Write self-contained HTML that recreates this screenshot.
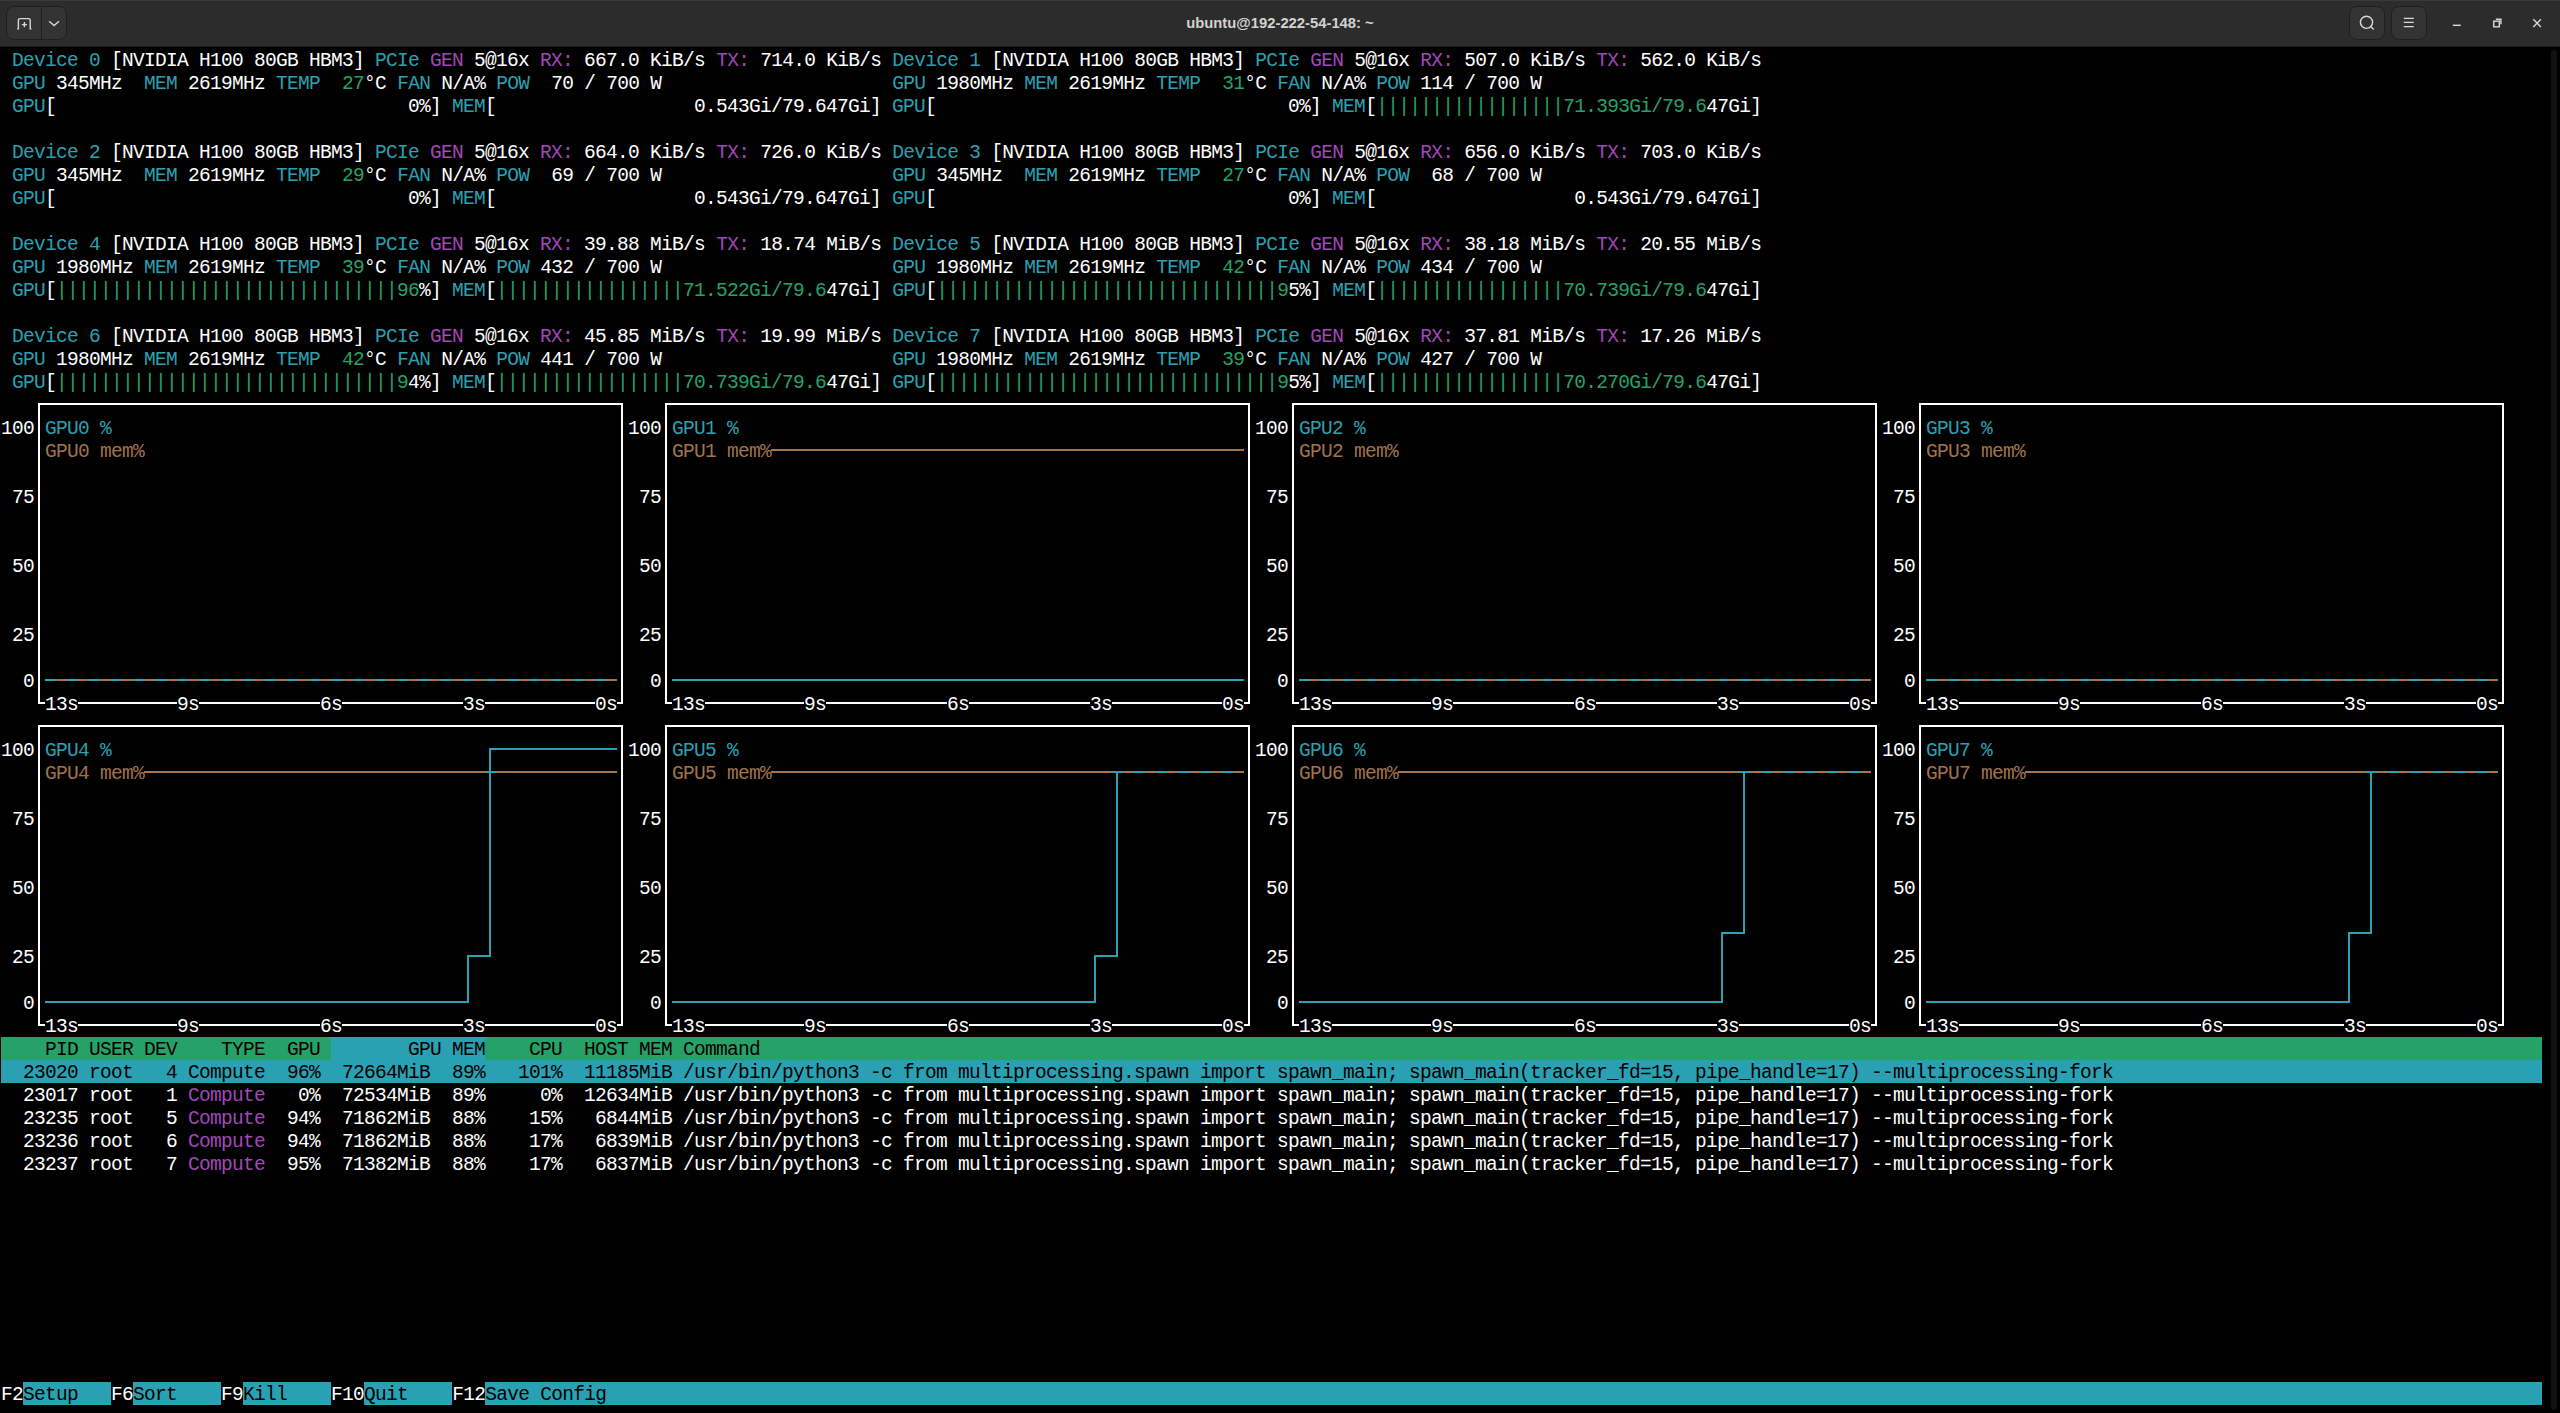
<!DOCTYPE html><html><head><meta charset="utf-8"><style>
html,body{margin:0;padding:0;width:2560px;height:1413px;overflow:hidden;background:#000}
.r{position:absolute;left:1px;height:23px;line-height:23px;font-family:"Liberation Mono",monospace;font-size:19.500px;letter-spacing:-0.7019px;white-space:pre;color:#fff}
.b{position:absolute}
.c{color:#2aa1b3}.g{color:#26a269}.m{color:#a347ba}.y{color:#a2734c}.k{color:#000000}
#hb{position:absolute;left:0;top:0;width:2560px;height:46px;background:#2c2c2c;box-shadow:inset 0 1px 0 #3a3a3a;border-bottom:1px solid #1b1b1b}
.btn{position:absolute;top:6px;height:32px;background:#333;border:1px solid #1f1f1f;border-radius:8px;box-sizing:content-box}
#title{position:absolute;left:0;top:0;width:2560px;height:46px;line-height:46px;text-align:center;font-family:"Liberation Sans",sans-serif;font-weight:bold;font-size:14.8px;color:#d2d2d2}
</style></head><body>
<div id="hb"></div>
<div class="btn" style="left:6px;width:59px"></div><div class="b" style="left:41px;top:7px;width:1px;height:32px;background:#1f1f1f"></div>
<svg class="b" style="left:0;top:0" width="80" height="47" viewBox="0 0 80 47" fill="none" stroke="#d8d8d8" stroke-width="1.4"><path d="M17.2 28.7 h1.2 v-8.6 a1.5 1.5 0 0 1 1.5 -1.5 h8.8 a1.5 1.5 0 0 1 1.5 1.5 v8.6 h1.2"/><path d="M24.4 22 v5.2 M21.8 24.6 h5.2"/><path d="M49.2 21.2 l4.9 4.4 l4.9 -4.4"/></svg>
<div id="title">ubuntu@192-222-54-148: ~</div>
<div class="btn" style="left:2349px;width:34px"></div><div class="btn" style="left:2391px;width:34px"></div>
<svg class="b" style="left:2340px;top:0" width="220" height="47" viewBox="0 0 220 47" fill="none" stroke="#d8d8d8" stroke-width="1.4"><circle cx="26.5" cy="22.3" r="6.1"/><path d="M30.7 26.6 l3 3"/><path d="M63.8 18.4 h10 M63.8 22.4 h10 M63.8 26.6 h10"/><path d="M112.8 25.3 h8"/><rect x="153.7" y="21.2" width="5.6" height="5.6"/><path d="M155.8 19.2 h5.1 v5.1"/><path d="M193.3 19.3 l7.6 7.6 M200.9 19.3 l-7.6 7.6"/></svg>
<div class="b" style="left:2551px;top:50px;width:6px;height:1360px;background:#111;border-radius:3px"></div>
<div class="b" style="left:1px;top:1037px;width:330px;height:23px;background:#26a269"></div>
<div class="b" style="left:331px;top:1037px;width:154px;height:23px;background:#2aa1b3"></div>
<div class="b" style="left:485px;top:1037px;width:2057px;height:23px;background:#26a269"></div>
<div class="b" style="left:1px;top:1060px;width:2541px;height:23px;background:#2aa1b3"></div>
<div class="b" style="left:23px;top:1382px;width:88px;height:23px;background:#2aa1b3"></div>
<div class="b" style="left:133px;top:1382px;width:88px;height:23px;background:#2aa1b3"></div>
<div class="b" style="left:243px;top:1382px;width:88px;height:23px;background:#2aa1b3"></div>
<div class="b" style="left:364px;top:1382px;width:88px;height:23px;background:#2aa1b3"></div>
<div class="b" style="left:485px;top:1382px;width:2057px;height:23px;background:#2aa1b3"></div>
<div class="b" style="left:771px;top:449px;width:473px;height:2px;background:#a2734c"></div>
<div class="b" style="left:56px;top:679px;width:11px;height:2px;background:#a2734c"></div>
<div class="b" style="left:78px;top:679px;width:11px;height:2px;background:#a2734c"></div>
<div class="b" style="left:100px;top:679px;width:11px;height:2px;background:#a2734c"></div>
<div class="b" style="left:122px;top:679px;width:11px;height:2px;background:#a2734c"></div>
<div class="b" style="left:144px;top:679px;width:11px;height:2px;background:#a2734c"></div>
<div class="b" style="left:166px;top:679px;width:11px;height:2px;background:#a2734c"></div>
<div class="b" style="left:188px;top:679px;width:11px;height:2px;background:#a2734c"></div>
<div class="b" style="left:210px;top:679px;width:11px;height:2px;background:#a2734c"></div>
<div class="b" style="left:232px;top:679px;width:11px;height:2px;background:#a2734c"></div>
<div class="b" style="left:254px;top:679px;width:11px;height:2px;background:#a2734c"></div>
<div class="b" style="left:276px;top:679px;width:11px;height:2px;background:#a2734c"></div>
<div class="b" style="left:298px;top:679px;width:11px;height:2px;background:#a2734c"></div>
<div class="b" style="left:320px;top:679px;width:11px;height:2px;background:#a2734c"></div>
<div class="b" style="left:342px;top:679px;width:11px;height:2px;background:#a2734c"></div>
<div class="b" style="left:364px;top:679px;width:11px;height:2px;background:#a2734c"></div>
<div class="b" style="left:386px;top:679px;width:11px;height:2px;background:#a2734c"></div>
<div class="b" style="left:408px;top:679px;width:11px;height:2px;background:#a2734c"></div>
<div class="b" style="left:430px;top:679px;width:11px;height:2px;background:#a2734c"></div>
<div class="b" style="left:452px;top:679px;width:11px;height:2px;background:#a2734c"></div>
<div class="b" style="left:474px;top:679px;width:11px;height:2px;background:#a2734c"></div>
<div class="b" style="left:496px;top:679px;width:11px;height:2px;background:#a2734c"></div>
<div class="b" style="left:518px;top:679px;width:11px;height:2px;background:#a2734c"></div>
<div class="b" style="left:540px;top:679px;width:11px;height:2px;background:#a2734c"></div>
<div class="b" style="left:562px;top:679px;width:11px;height:2px;background:#a2734c"></div>
<div class="b" style="left:584px;top:679px;width:11px;height:2px;background:#a2734c"></div>
<div class="b" style="left:606px;top:679px;width:11px;height:2px;background:#a2734c"></div>
<div class="b" style="left:1310px;top:679px;width:11px;height:2px;background:#a2734c"></div>
<div class="b" style="left:1332px;top:679px;width:11px;height:2px;background:#a2734c"></div>
<div class="b" style="left:1354px;top:679px;width:11px;height:2px;background:#a2734c"></div>
<div class="b" style="left:1376px;top:679px;width:11px;height:2px;background:#a2734c"></div>
<div class="b" style="left:1398px;top:679px;width:11px;height:2px;background:#a2734c"></div>
<div class="b" style="left:1420px;top:679px;width:11px;height:2px;background:#a2734c"></div>
<div class="b" style="left:1442px;top:679px;width:11px;height:2px;background:#a2734c"></div>
<div class="b" style="left:1464px;top:679px;width:11px;height:2px;background:#a2734c"></div>
<div class="b" style="left:1486px;top:679px;width:11px;height:2px;background:#a2734c"></div>
<div class="b" style="left:1508px;top:679px;width:11px;height:2px;background:#a2734c"></div>
<div class="b" style="left:1530px;top:679px;width:11px;height:2px;background:#a2734c"></div>
<div class="b" style="left:1552px;top:679px;width:11px;height:2px;background:#a2734c"></div>
<div class="b" style="left:1574px;top:679px;width:11px;height:2px;background:#a2734c"></div>
<div class="b" style="left:1596px;top:679px;width:11px;height:2px;background:#a2734c"></div>
<div class="b" style="left:1618px;top:679px;width:11px;height:2px;background:#a2734c"></div>
<div class="b" style="left:1640px;top:679px;width:11px;height:2px;background:#a2734c"></div>
<div class="b" style="left:1662px;top:679px;width:11px;height:2px;background:#a2734c"></div>
<div class="b" style="left:1684px;top:679px;width:11px;height:2px;background:#a2734c"></div>
<div class="b" style="left:1706px;top:679px;width:11px;height:2px;background:#a2734c"></div>
<div class="b" style="left:1728px;top:679px;width:11px;height:2px;background:#a2734c"></div>
<div class="b" style="left:1750px;top:679px;width:11px;height:2px;background:#a2734c"></div>
<div class="b" style="left:1772px;top:679px;width:11px;height:2px;background:#a2734c"></div>
<div class="b" style="left:1794px;top:679px;width:11px;height:2px;background:#a2734c"></div>
<div class="b" style="left:1816px;top:679px;width:11px;height:2px;background:#a2734c"></div>
<div class="b" style="left:1838px;top:679px;width:11px;height:2px;background:#a2734c"></div>
<div class="b" style="left:1860px;top:679px;width:11px;height:2px;background:#a2734c"></div>
<div class="b" style="left:1937px;top:679px;width:11px;height:2px;background:#a2734c"></div>
<div class="b" style="left:1959px;top:679px;width:11px;height:2px;background:#a2734c"></div>
<div class="b" style="left:1981px;top:679px;width:11px;height:2px;background:#a2734c"></div>
<div class="b" style="left:2003px;top:679px;width:11px;height:2px;background:#a2734c"></div>
<div class="b" style="left:2025px;top:679px;width:11px;height:2px;background:#a2734c"></div>
<div class="b" style="left:2047px;top:679px;width:11px;height:2px;background:#a2734c"></div>
<div class="b" style="left:2069px;top:679px;width:11px;height:2px;background:#a2734c"></div>
<div class="b" style="left:2091px;top:679px;width:11px;height:2px;background:#a2734c"></div>
<div class="b" style="left:2113px;top:679px;width:11px;height:2px;background:#a2734c"></div>
<div class="b" style="left:2135px;top:679px;width:11px;height:2px;background:#a2734c"></div>
<div class="b" style="left:2157px;top:679px;width:11px;height:2px;background:#a2734c"></div>
<div class="b" style="left:2179px;top:679px;width:11px;height:2px;background:#a2734c"></div>
<div class="b" style="left:2201px;top:679px;width:11px;height:2px;background:#a2734c"></div>
<div class="b" style="left:2223px;top:679px;width:11px;height:2px;background:#a2734c"></div>
<div class="b" style="left:2245px;top:679px;width:11px;height:2px;background:#a2734c"></div>
<div class="b" style="left:2267px;top:679px;width:11px;height:2px;background:#a2734c"></div>
<div class="b" style="left:2289px;top:679px;width:11px;height:2px;background:#a2734c"></div>
<div class="b" style="left:2311px;top:679px;width:11px;height:2px;background:#a2734c"></div>
<div class="b" style="left:2333px;top:679px;width:11px;height:2px;background:#a2734c"></div>
<div class="b" style="left:2355px;top:679px;width:11px;height:2px;background:#a2734c"></div>
<div class="b" style="left:2377px;top:679px;width:11px;height:2px;background:#a2734c"></div>
<div class="b" style="left:2399px;top:679px;width:11px;height:2px;background:#a2734c"></div>
<div class="b" style="left:2421px;top:679px;width:11px;height:2px;background:#a2734c"></div>
<div class="b" style="left:2443px;top:679px;width:11px;height:2px;background:#a2734c"></div>
<div class="b" style="left:2465px;top:679px;width:11px;height:2px;background:#a2734c"></div>
<div class="b" style="left:2487px;top:679px;width:11px;height:2px;background:#a2734c"></div>
<div class="b" style="left:144px;top:771px;width:341px;height:2px;background:#a2734c"></div>
<div class="b" style="left:496px;top:771px;width:121px;height:2px;background:#a2734c"></div>
<div class="b" style="left:771px;top:771px;width:341px;height:2px;background:#a2734c"></div>
<div class="b" style="left:1123px;top:771px;width:11px;height:2px;background:#a2734c"></div>
<div class="b" style="left:1145px;top:771px;width:11px;height:2px;background:#a2734c"></div>
<div class="b" style="left:1167px;top:771px;width:11px;height:2px;background:#a2734c"></div>
<div class="b" style="left:1189px;top:771px;width:11px;height:2px;background:#a2734c"></div>
<div class="b" style="left:1211px;top:771px;width:11px;height:2px;background:#a2734c"></div>
<div class="b" style="left:1233px;top:771px;width:11px;height:2px;background:#a2734c"></div>
<div class="b" style="left:1398px;top:771px;width:341px;height:2px;background:#a2734c"></div>
<div class="b" style="left:1750px;top:771px;width:11px;height:2px;background:#a2734c"></div>
<div class="b" style="left:1772px;top:771px;width:11px;height:2px;background:#a2734c"></div>
<div class="b" style="left:1794px;top:771px;width:11px;height:2px;background:#a2734c"></div>
<div class="b" style="left:1816px;top:771px;width:11px;height:2px;background:#a2734c"></div>
<div class="b" style="left:1838px;top:771px;width:11px;height:2px;background:#a2734c"></div>
<div class="b" style="left:1860px;top:771px;width:11px;height:2px;background:#a2734c"></div>
<div class="b" style="left:2025px;top:771px;width:341px;height:2px;background:#a2734c"></div>
<div class="b" style="left:2377px;top:771px;width:11px;height:2px;background:#a2734c"></div>
<div class="b" style="left:2399px;top:771px;width:11px;height:2px;background:#a2734c"></div>
<div class="b" style="left:2421px;top:771px;width:11px;height:2px;background:#a2734c"></div>
<div class="b" style="left:2443px;top:771px;width:11px;height:2px;background:#a2734c"></div>
<div class="b" style="left:2465px;top:771px;width:11px;height:2px;background:#a2734c"></div>
<div class="b" style="left:2487px;top:771px;width:11px;height:2px;background:#a2734c"></div>
<div class="b" style="left:38px;top:403px;width:585px;height:2px;background:#ffffff"></div>
<div class="b" style="left:665px;top:403px;width:585px;height:2px;background:#ffffff"></div>
<div class="b" style="left:1292px;top:403px;width:585px;height:2px;background:#ffffff"></div>
<div class="b" style="left:1919px;top:403px;width:585px;height:2px;background:#ffffff"></div>
<div class="b" style="left:45px;top:679px;width:11px;height:2px;background:#2aa1b3"></div>
<div class="b" style="left:67px;top:679px;width:11px;height:2px;background:#2aa1b3"></div>
<div class="b" style="left:89px;top:679px;width:11px;height:2px;background:#2aa1b3"></div>
<div class="b" style="left:111px;top:679px;width:11px;height:2px;background:#2aa1b3"></div>
<div class="b" style="left:133px;top:679px;width:11px;height:2px;background:#2aa1b3"></div>
<div class="b" style="left:155px;top:679px;width:11px;height:2px;background:#2aa1b3"></div>
<div class="b" style="left:177px;top:679px;width:11px;height:2px;background:#2aa1b3"></div>
<div class="b" style="left:199px;top:679px;width:11px;height:2px;background:#2aa1b3"></div>
<div class="b" style="left:221px;top:679px;width:11px;height:2px;background:#2aa1b3"></div>
<div class="b" style="left:243px;top:679px;width:11px;height:2px;background:#2aa1b3"></div>
<div class="b" style="left:265px;top:679px;width:11px;height:2px;background:#2aa1b3"></div>
<div class="b" style="left:287px;top:679px;width:11px;height:2px;background:#2aa1b3"></div>
<div class="b" style="left:309px;top:679px;width:11px;height:2px;background:#2aa1b3"></div>
<div class="b" style="left:331px;top:679px;width:11px;height:2px;background:#2aa1b3"></div>
<div class="b" style="left:353px;top:679px;width:11px;height:2px;background:#2aa1b3"></div>
<div class="b" style="left:375px;top:679px;width:11px;height:2px;background:#2aa1b3"></div>
<div class="b" style="left:397px;top:679px;width:11px;height:2px;background:#2aa1b3"></div>
<div class="b" style="left:419px;top:679px;width:11px;height:2px;background:#2aa1b3"></div>
<div class="b" style="left:441px;top:679px;width:11px;height:2px;background:#2aa1b3"></div>
<div class="b" style="left:463px;top:679px;width:11px;height:2px;background:#2aa1b3"></div>
<div class="b" style="left:485px;top:679px;width:11px;height:2px;background:#2aa1b3"></div>
<div class="b" style="left:507px;top:679px;width:11px;height:2px;background:#2aa1b3"></div>
<div class="b" style="left:529px;top:679px;width:11px;height:2px;background:#2aa1b3"></div>
<div class="b" style="left:551px;top:679px;width:11px;height:2px;background:#2aa1b3"></div>
<div class="b" style="left:573px;top:679px;width:11px;height:2px;background:#2aa1b3"></div>
<div class="b" style="left:595px;top:679px;width:11px;height:2px;background:#2aa1b3"></div>
<div class="b" style="left:672px;top:679px;width:572px;height:2px;background:#2aa1b3"></div>
<div class="b" style="left:1299px;top:679px;width:11px;height:2px;background:#2aa1b3"></div>
<div class="b" style="left:1321px;top:679px;width:11px;height:2px;background:#2aa1b3"></div>
<div class="b" style="left:1343px;top:679px;width:11px;height:2px;background:#2aa1b3"></div>
<div class="b" style="left:1365px;top:679px;width:11px;height:2px;background:#2aa1b3"></div>
<div class="b" style="left:1387px;top:679px;width:11px;height:2px;background:#2aa1b3"></div>
<div class="b" style="left:1409px;top:679px;width:11px;height:2px;background:#2aa1b3"></div>
<div class="b" style="left:1431px;top:679px;width:11px;height:2px;background:#2aa1b3"></div>
<div class="b" style="left:1453px;top:679px;width:11px;height:2px;background:#2aa1b3"></div>
<div class="b" style="left:1475px;top:679px;width:11px;height:2px;background:#2aa1b3"></div>
<div class="b" style="left:1497px;top:679px;width:11px;height:2px;background:#2aa1b3"></div>
<div class="b" style="left:1519px;top:679px;width:11px;height:2px;background:#2aa1b3"></div>
<div class="b" style="left:1541px;top:679px;width:11px;height:2px;background:#2aa1b3"></div>
<div class="b" style="left:1563px;top:679px;width:11px;height:2px;background:#2aa1b3"></div>
<div class="b" style="left:1585px;top:679px;width:11px;height:2px;background:#2aa1b3"></div>
<div class="b" style="left:1607px;top:679px;width:11px;height:2px;background:#2aa1b3"></div>
<div class="b" style="left:1629px;top:679px;width:11px;height:2px;background:#2aa1b3"></div>
<div class="b" style="left:1651px;top:679px;width:11px;height:2px;background:#2aa1b3"></div>
<div class="b" style="left:1673px;top:679px;width:11px;height:2px;background:#2aa1b3"></div>
<div class="b" style="left:1695px;top:679px;width:11px;height:2px;background:#2aa1b3"></div>
<div class="b" style="left:1717px;top:679px;width:11px;height:2px;background:#2aa1b3"></div>
<div class="b" style="left:1739px;top:679px;width:11px;height:2px;background:#2aa1b3"></div>
<div class="b" style="left:1761px;top:679px;width:11px;height:2px;background:#2aa1b3"></div>
<div class="b" style="left:1783px;top:679px;width:11px;height:2px;background:#2aa1b3"></div>
<div class="b" style="left:1805px;top:679px;width:11px;height:2px;background:#2aa1b3"></div>
<div class="b" style="left:1827px;top:679px;width:11px;height:2px;background:#2aa1b3"></div>
<div class="b" style="left:1849px;top:679px;width:11px;height:2px;background:#2aa1b3"></div>
<div class="b" style="left:1926px;top:679px;width:11px;height:2px;background:#2aa1b3"></div>
<div class="b" style="left:1948px;top:679px;width:11px;height:2px;background:#2aa1b3"></div>
<div class="b" style="left:1970px;top:679px;width:11px;height:2px;background:#2aa1b3"></div>
<div class="b" style="left:1992px;top:679px;width:11px;height:2px;background:#2aa1b3"></div>
<div class="b" style="left:2014px;top:679px;width:11px;height:2px;background:#2aa1b3"></div>
<div class="b" style="left:2036px;top:679px;width:11px;height:2px;background:#2aa1b3"></div>
<div class="b" style="left:2058px;top:679px;width:11px;height:2px;background:#2aa1b3"></div>
<div class="b" style="left:2080px;top:679px;width:11px;height:2px;background:#2aa1b3"></div>
<div class="b" style="left:2102px;top:679px;width:11px;height:2px;background:#2aa1b3"></div>
<div class="b" style="left:2124px;top:679px;width:11px;height:2px;background:#2aa1b3"></div>
<div class="b" style="left:2146px;top:679px;width:11px;height:2px;background:#2aa1b3"></div>
<div class="b" style="left:2168px;top:679px;width:11px;height:2px;background:#2aa1b3"></div>
<div class="b" style="left:2190px;top:679px;width:11px;height:2px;background:#2aa1b3"></div>
<div class="b" style="left:2212px;top:679px;width:11px;height:2px;background:#2aa1b3"></div>
<div class="b" style="left:2234px;top:679px;width:11px;height:2px;background:#2aa1b3"></div>
<div class="b" style="left:2256px;top:679px;width:11px;height:2px;background:#2aa1b3"></div>
<div class="b" style="left:2278px;top:679px;width:11px;height:2px;background:#2aa1b3"></div>
<div class="b" style="left:2300px;top:679px;width:11px;height:2px;background:#2aa1b3"></div>
<div class="b" style="left:2322px;top:679px;width:11px;height:2px;background:#2aa1b3"></div>
<div class="b" style="left:2344px;top:679px;width:11px;height:2px;background:#2aa1b3"></div>
<div class="b" style="left:2366px;top:679px;width:11px;height:2px;background:#2aa1b3"></div>
<div class="b" style="left:2388px;top:679px;width:11px;height:2px;background:#2aa1b3"></div>
<div class="b" style="left:2410px;top:679px;width:11px;height:2px;background:#2aa1b3"></div>
<div class="b" style="left:2432px;top:679px;width:11px;height:2px;background:#2aa1b3"></div>
<div class="b" style="left:2454px;top:679px;width:11px;height:2px;background:#2aa1b3"></div>
<div class="b" style="left:2476px;top:679px;width:11px;height:2px;background:#2aa1b3"></div>
<div class="b" style="left:38px;top:702px;width:7px;height:2px;background:#ffffff"></div>
<div class="b" style="left:78px;top:702px;width:99px;height:2px;background:#ffffff"></div>
<div class="b" style="left:199px;top:702px;width:121px;height:2px;background:#ffffff"></div>
<div class="b" style="left:342px;top:702px;width:121px;height:2px;background:#ffffff"></div>
<div class="b" style="left:485px;top:702px;width:110px;height:2px;background:#ffffff"></div>
<div class="b" style="left:617px;top:702px;width:6px;height:2px;background:#ffffff"></div>
<div class="b" style="left:665px;top:702px;width:7px;height:2px;background:#ffffff"></div>
<div class="b" style="left:705px;top:702px;width:99px;height:2px;background:#ffffff"></div>
<div class="b" style="left:826px;top:702px;width:121px;height:2px;background:#ffffff"></div>
<div class="b" style="left:969px;top:702px;width:121px;height:2px;background:#ffffff"></div>
<div class="b" style="left:1112px;top:702px;width:110px;height:2px;background:#ffffff"></div>
<div class="b" style="left:1244px;top:702px;width:6px;height:2px;background:#ffffff"></div>
<div class="b" style="left:1292px;top:702px;width:7px;height:2px;background:#ffffff"></div>
<div class="b" style="left:1332px;top:702px;width:99px;height:2px;background:#ffffff"></div>
<div class="b" style="left:1453px;top:702px;width:121px;height:2px;background:#ffffff"></div>
<div class="b" style="left:1596px;top:702px;width:121px;height:2px;background:#ffffff"></div>
<div class="b" style="left:1739px;top:702px;width:110px;height:2px;background:#ffffff"></div>
<div class="b" style="left:1871px;top:702px;width:6px;height:2px;background:#ffffff"></div>
<div class="b" style="left:1919px;top:702px;width:7px;height:2px;background:#ffffff"></div>
<div class="b" style="left:1959px;top:702px;width:99px;height:2px;background:#ffffff"></div>
<div class="b" style="left:2080px;top:702px;width:121px;height:2px;background:#ffffff"></div>
<div class="b" style="left:2223px;top:702px;width:121px;height:2px;background:#ffffff"></div>
<div class="b" style="left:2366px;top:702px;width:110px;height:2px;background:#ffffff"></div>
<div class="b" style="left:2498px;top:702px;width:6px;height:2px;background:#ffffff"></div>
<div class="b" style="left:38px;top:725px;width:585px;height:2px;background:#ffffff"></div>
<div class="b" style="left:665px;top:725px;width:585px;height:2px;background:#ffffff"></div>
<div class="b" style="left:1292px;top:725px;width:585px;height:2px;background:#ffffff"></div>
<div class="b" style="left:1919px;top:725px;width:585px;height:2px;background:#ffffff"></div>
<div class="b" style="left:489px;top:748px;width:128px;height:2px;background:#2aa1b3"></div>
<div class="b" style="left:485px;top:771px;width:11px;height:2px;background:#2aa1b3"></div>
<div class="b" style="left:1112px;top:771px;width:11px;height:2px;background:#2aa1b3"></div>
<div class="b" style="left:1134px;top:771px;width:11px;height:2px;background:#2aa1b3"></div>
<div class="b" style="left:1156px;top:771px;width:11px;height:2px;background:#2aa1b3"></div>
<div class="b" style="left:1178px;top:771px;width:11px;height:2px;background:#2aa1b3"></div>
<div class="b" style="left:1200px;top:771px;width:11px;height:2px;background:#2aa1b3"></div>
<div class="b" style="left:1222px;top:771px;width:11px;height:2px;background:#2aa1b3"></div>
<div class="b" style="left:1739px;top:771px;width:11px;height:2px;background:#2aa1b3"></div>
<div class="b" style="left:1761px;top:771px;width:11px;height:2px;background:#2aa1b3"></div>
<div class="b" style="left:1783px;top:771px;width:11px;height:2px;background:#2aa1b3"></div>
<div class="b" style="left:1805px;top:771px;width:11px;height:2px;background:#2aa1b3"></div>
<div class="b" style="left:1827px;top:771px;width:11px;height:2px;background:#2aa1b3"></div>
<div class="b" style="left:1849px;top:771px;width:11px;height:2px;background:#2aa1b3"></div>
<div class="b" style="left:2366px;top:771px;width:11px;height:2px;background:#2aa1b3"></div>
<div class="b" style="left:2388px;top:771px;width:11px;height:2px;background:#2aa1b3"></div>
<div class="b" style="left:2410px;top:771px;width:11px;height:2px;background:#2aa1b3"></div>
<div class="b" style="left:2432px;top:771px;width:11px;height:2px;background:#2aa1b3"></div>
<div class="b" style="left:2454px;top:771px;width:11px;height:2px;background:#2aa1b3"></div>
<div class="b" style="left:2476px;top:771px;width:11px;height:2px;background:#2aa1b3"></div>
<div class="b" style="left:1721px;top:932px;width:24px;height:2px;background:#2aa1b3"></div>
<div class="b" style="left:2348px;top:932px;width:24px;height:2px;background:#2aa1b3"></div>
<div class="b" style="left:467px;top:955px;width:24px;height:2px;background:#2aa1b3"></div>
<div class="b" style="left:1094px;top:955px;width:24px;height:2px;background:#2aa1b3"></div>
<div class="b" style="left:45px;top:1001px;width:424px;height:2px;background:#2aa1b3"></div>
<div class="b" style="left:672px;top:1001px;width:424px;height:2px;background:#2aa1b3"></div>
<div class="b" style="left:1299px;top:1001px;width:424px;height:2px;background:#2aa1b3"></div>
<div class="b" style="left:1926px;top:1001px;width:424px;height:2px;background:#2aa1b3"></div>
<div class="b" style="left:38px;top:1024px;width:7px;height:2px;background:#ffffff"></div>
<div class="b" style="left:78px;top:1024px;width:99px;height:2px;background:#ffffff"></div>
<div class="b" style="left:199px;top:1024px;width:121px;height:2px;background:#ffffff"></div>
<div class="b" style="left:342px;top:1024px;width:121px;height:2px;background:#ffffff"></div>
<div class="b" style="left:485px;top:1024px;width:110px;height:2px;background:#ffffff"></div>
<div class="b" style="left:617px;top:1024px;width:6px;height:2px;background:#ffffff"></div>
<div class="b" style="left:665px;top:1024px;width:7px;height:2px;background:#ffffff"></div>
<div class="b" style="left:705px;top:1024px;width:99px;height:2px;background:#ffffff"></div>
<div class="b" style="left:826px;top:1024px;width:121px;height:2px;background:#ffffff"></div>
<div class="b" style="left:969px;top:1024px;width:121px;height:2px;background:#ffffff"></div>
<div class="b" style="left:1112px;top:1024px;width:110px;height:2px;background:#ffffff"></div>
<div class="b" style="left:1244px;top:1024px;width:6px;height:2px;background:#ffffff"></div>
<div class="b" style="left:1292px;top:1024px;width:7px;height:2px;background:#ffffff"></div>
<div class="b" style="left:1332px;top:1024px;width:99px;height:2px;background:#ffffff"></div>
<div class="b" style="left:1453px;top:1024px;width:121px;height:2px;background:#ffffff"></div>
<div class="b" style="left:1596px;top:1024px;width:121px;height:2px;background:#ffffff"></div>
<div class="b" style="left:1739px;top:1024px;width:110px;height:2px;background:#ffffff"></div>
<div class="b" style="left:1871px;top:1024px;width:6px;height:2px;background:#ffffff"></div>
<div class="b" style="left:1919px;top:1024px;width:7px;height:2px;background:#ffffff"></div>
<div class="b" style="left:1959px;top:1024px;width:99px;height:2px;background:#ffffff"></div>
<div class="b" style="left:2080px;top:1024px;width:121px;height:2px;background:#ffffff"></div>
<div class="b" style="left:2223px;top:1024px;width:121px;height:2px;background:#ffffff"></div>
<div class="b" style="left:2366px;top:1024px;width:110px;height:2px;background:#ffffff"></div>
<div class="b" style="left:2498px;top:1024px;width:6px;height:2px;background:#ffffff"></div>
<div class="b" style="left:38px;top:403px;width:2px;height:301px;background:#ffffff"></div>
<div class="b" style="left:38px;top:725px;width:2px;height:301px;background:#ffffff"></div>
<div class="b" style="left:467px;top:955px;width:2px;height:48px;background:#2aa1b3"></div>
<div class="b" style="left:489px;top:748px;width:2px;height:209px;background:#2aa1b3"></div>
<div class="b" style="left:621px;top:403px;width:2px;height:301px;background:#ffffff"></div>
<div class="b" style="left:621px;top:725px;width:2px;height:301px;background:#ffffff"></div>
<div class="b" style="left:665px;top:403px;width:2px;height:301px;background:#ffffff"></div>
<div class="b" style="left:665px;top:725px;width:2px;height:301px;background:#ffffff"></div>
<div class="b" style="left:1094px;top:955px;width:2px;height:48px;background:#2aa1b3"></div>
<div class="b" style="left:1116px;top:771px;width:2px;height:186px;background:#2aa1b3"></div>
<div class="b" style="left:1248px;top:403px;width:2px;height:301px;background:#ffffff"></div>
<div class="b" style="left:1248px;top:725px;width:2px;height:301px;background:#ffffff"></div>
<div class="b" style="left:1292px;top:403px;width:2px;height:301px;background:#ffffff"></div>
<div class="b" style="left:1292px;top:725px;width:2px;height:301px;background:#ffffff"></div>
<div class="b" style="left:1721px;top:932px;width:2px;height:71px;background:#2aa1b3"></div>
<div class="b" style="left:1743px;top:771px;width:2px;height:163px;background:#2aa1b3"></div>
<div class="b" style="left:1875px;top:403px;width:2px;height:301px;background:#ffffff"></div>
<div class="b" style="left:1875px;top:725px;width:2px;height:301px;background:#ffffff"></div>
<div class="b" style="left:1919px;top:403px;width:2px;height:301px;background:#ffffff"></div>
<div class="b" style="left:1919px;top:725px;width:2px;height:301px;background:#ffffff"></div>
<div class="b" style="left:2348px;top:932px;width:2px;height:71px;background:#2aa1b3"></div>
<div class="b" style="left:2370px;top:771px;width:2px;height:163px;background:#2aa1b3"></div>
<div class="b" style="left:2502px;top:403px;width:2px;height:301px;background:#ffffff"></div>
<div class="b" style="left:2502px;top:725px;width:2px;height:301px;background:#ffffff"></div>
<div class="r" style="top:50px"> <span class="c">Device 0 </span>[NVIDIA H100 80GB HBM3] <span class="c">PCIe </span><span class="m">GEN </span>5@16x <span class="m">RX: </span>667.0 KiB/s <span class="m">TX: </span>714.0 KiB/s <span class="c">Device 1 </span>[NVIDIA H100 80GB HBM3] <span class="c">PCIe </span><span class="m">GEN </span>5@16x <span class="m">RX: </span>507.0 KiB/s <span class="m">TX: </span>562.0 KiB/s</div>
<div class="r" style="top:73px"> <span class="c">GPU </span>345MHz  <span class="c">MEM </span>2619MHz <span class="c">TEMP  </span><span class="g">27</span>°C <span class="c">FAN </span>N/A% <span class="c">POW  </span>70 / 700 W                     <span class="c">GPU </span>1980MHz <span class="c">MEM </span>2619MHz <span class="c">TEMP  </span><span class="g">31</span>°C <span class="c">FAN </span>N/A% <span class="c">POW </span>114 / 700 W</div>
<div class="r" style="top:96px"> <span class="c">GPU</span>[                                0%] <span class="c">MEM</span>[                  0.543Gi/79.647Gi] <span class="c">GPU</span>[                                0%] <span class="c">MEM</span>[<span class="g">|||||||||||||||||71.393Gi/79.6</span>47Gi]</div>
<div class="r" style="top:142px"> <span class="c">Device 2 </span>[NVIDIA H100 80GB HBM3] <span class="c">PCIe </span><span class="m">GEN </span>5@16x <span class="m">RX: </span>664.0 KiB/s <span class="m">TX: </span>726.0 KiB/s <span class="c">Device 3 </span>[NVIDIA H100 80GB HBM3] <span class="c">PCIe </span><span class="m">GEN </span>5@16x <span class="m">RX: </span>656.0 KiB/s <span class="m">TX: </span>703.0 KiB/s</div>
<div class="r" style="top:165px"> <span class="c">GPU </span>345MHz  <span class="c">MEM </span>2619MHz <span class="c">TEMP  </span><span class="g">29</span>°C <span class="c">FAN </span>N/A% <span class="c">POW  </span>69 / 700 W                     <span class="c">GPU </span>345MHz  <span class="c">MEM </span>2619MHz <span class="c">TEMP  </span><span class="g">27</span>°C <span class="c">FAN </span>N/A% <span class="c">POW  </span>68 / 700 W</div>
<div class="r" style="top:188px"> <span class="c">GPU</span>[                                0%] <span class="c">MEM</span>[                  0.543Gi/79.647Gi] <span class="c">GPU</span>[                                0%] <span class="c">MEM</span>[                  0.543Gi/79.647Gi]</div>
<div class="r" style="top:234px"> <span class="c">Device 4 </span>[NVIDIA H100 80GB HBM3] <span class="c">PCIe </span><span class="m">GEN </span>5@16x <span class="m">RX: </span>39.88 MiB/s <span class="m">TX: </span>18.74 MiB/s <span class="c">Device 5 </span>[NVIDIA H100 80GB HBM3] <span class="c">PCIe </span><span class="m">GEN </span>5@16x <span class="m">RX: </span>38.18 MiB/s <span class="m">TX: </span>20.55 MiB/s</div>
<div class="r" style="top:257px"> <span class="c">GPU </span>1980MHz <span class="c">MEM </span>2619MHz <span class="c">TEMP  </span><span class="g">39</span>°C <span class="c">FAN </span>N/A% <span class="c">POW </span>432 / 700 W                     <span class="c">GPU </span>1980MHz <span class="c">MEM </span>2619MHz <span class="c">TEMP  </span><span class="g">42</span>°C <span class="c">FAN </span>N/A% <span class="c">POW </span>434 / 700 W</div>
<div class="r" style="top:280px"> <span class="c">GPU</span>[<span class="g">|||||||||||||||||||||||||||||||96</span>%] <span class="c">MEM</span>[<span class="g">|||||||||||||||||71.522Gi/79.6</span>47Gi] <span class="c">GPU</span>[<span class="g">|||||||||||||||||||||||||||||||9</span>5%] <span class="c">MEM</span>[<span class="g">|||||||||||||||||70.739Gi/79.6</span>47Gi]</div>
<div class="r" style="top:326px"> <span class="c">Device 6 </span>[NVIDIA H100 80GB HBM3] <span class="c">PCIe </span><span class="m">GEN </span>5@16x <span class="m">RX: </span>45.85 MiB/s <span class="m">TX: </span>19.99 MiB/s <span class="c">Device 7 </span>[NVIDIA H100 80GB HBM3] <span class="c">PCIe </span><span class="m">GEN </span>5@16x <span class="m">RX: </span>37.81 MiB/s <span class="m">TX: </span>17.26 MiB/s</div>
<div class="r" style="top:349px"> <span class="c">GPU </span>1980MHz <span class="c">MEM </span>2619MHz <span class="c">TEMP  </span><span class="g">42</span>°C <span class="c">FAN </span>N/A% <span class="c">POW </span>441 / 700 W                     <span class="c">GPU </span>1980MHz <span class="c">MEM </span>2619MHz <span class="c">TEMP  </span><span class="g">39</span>°C <span class="c">FAN </span>N/A% <span class="c">POW </span>427 / 700 W</div>
<div class="r" style="top:372px"> <span class="c">GPU</span>[<span class="g">|||||||||||||||||||||||||||||||9</span>4%] <span class="c">MEM</span>[<span class="g">|||||||||||||||||70.739Gi/79.6</span>47Gi] <span class="c">GPU</span>[<span class="g">|||||||||||||||||||||||||||||||9</span>5%] <span class="c">MEM</span>[<span class="g">|||||||||||||||||70.270Gi/79.6</span>47Gi]</div>
<div class="r" style="top:418px">100 <span class="c">GPU0 %                                               </span>100 <span class="c">GPU1 %                                               </span>100 <span class="c">GPU2 %                                               </span>100 <span class="c">GPU3 %</span></div>
<div class="r" style="top:441px">    <span class="y">GPU0 mem%                                                GPU1 mem%                                                GPU2 mem%                                                GPU3 mem%</span></div>
<div class="r" style="top:487px"> 75                                                       75                                                       75                                                       75</div>
<div class="r" style="top:556px"> 50                                                       50                                                       50                                                       50</div>
<div class="r" style="top:625px"> 25                                                       25                                                       25                                                       25</div>
<div class="r" style="top:671px">  0                                                        0                                                        0                                                        0</div>
<div class="r" style="top:694px">    13s         9s           6s           3s          0s     13s         9s           6s           3s          0s     13s         9s           6s           3s          0s     13s         9s           6s           3s          0s</div>
<div class="r" style="top:740px">100 <span class="c">GPU4 %                                               </span>100 <span class="c">GPU5 %                                               </span>100 <span class="c">GPU6 %                                               </span>100 <span class="c">GPU7 %</span></div>
<div class="r" style="top:763px">    <span class="y">GPU4 mem%                                                GPU5 mem%                                                GPU6 mem%                                                GPU7 mem%</span></div>
<div class="r" style="top:809px"> 75                                                       75                                                       75                                                       75</div>
<div class="r" style="top:878px"> 50                                                       50                                                       50                                                       50</div>
<div class="r" style="top:947px"> 25                                                       25                                                       25                                                       25</div>
<div class="r" style="top:993px">  0                                                        0                                                        0                                                        0</div>
<div class="r" style="top:1016px">    13s         9s           6s           3s          0s     13s         9s           6s           3s          0s     13s         9s           6s           3s          0s     13s         9s           6s           3s          0s</div>
<div class="r" style="top:1039px"><span class="k">    PID USER DEV    TYPE  GPU        GPU MEM    CPU  HOST MEM Command</span></div>
<div class="r" style="top:1062px">  <span class="k">23020 root   4 Compute  96%  72664MiB  89%   101%  11185MiB /usr/bin/python3 -c from multiprocessing.spawn import spawn_main; spawn_main(tracker_fd=15, pipe_handle=17) --multiprocessing-fork</span></div>
<div class="r" style="top:1085px">  23017 root   1 <span class="m">Compute   </span>0%  72534MiB  89%     0%  12634MiB /usr/bin/python3 -c from multiprocessing.spawn import spawn_main; spawn_main(tracker_fd=15, pipe_handle=17) --multiprocessing-fork</div>
<div class="r" style="top:1108px">  23235 root   5 <span class="m">Compute  </span>94%  71862MiB  88%    15%   6844MiB /usr/bin/python3 -c from multiprocessing.spawn import spawn_main; spawn_main(tracker_fd=15, pipe_handle=17) --multiprocessing-fork</div>
<div class="r" style="top:1131px">  23236 root   6 <span class="m">Compute  </span>94%  71862MiB  88%    17%   6839MiB /usr/bin/python3 -c from multiprocessing.spawn import spawn_main; spawn_main(tracker_fd=15, pipe_handle=17) --multiprocessing-fork</div>
<div class="r" style="top:1154px">  23237 root   7 <span class="m">Compute  </span>95%  71382MiB  88%    17%   6837MiB /usr/bin/python3 -c from multiprocessing.spawn import spawn_main; spawn_main(tracker_fd=15, pipe_handle=17) --multiprocessing-fork</div>
<div class="r" style="top:1384px">F2<span class="k">Setup   </span>F6<span class="k">Sort    </span>F9<span class="k">Kill    </span>F10<span class="k">Quit    </span>F12<span class="k">Save Config</span></div>
</body></html>
